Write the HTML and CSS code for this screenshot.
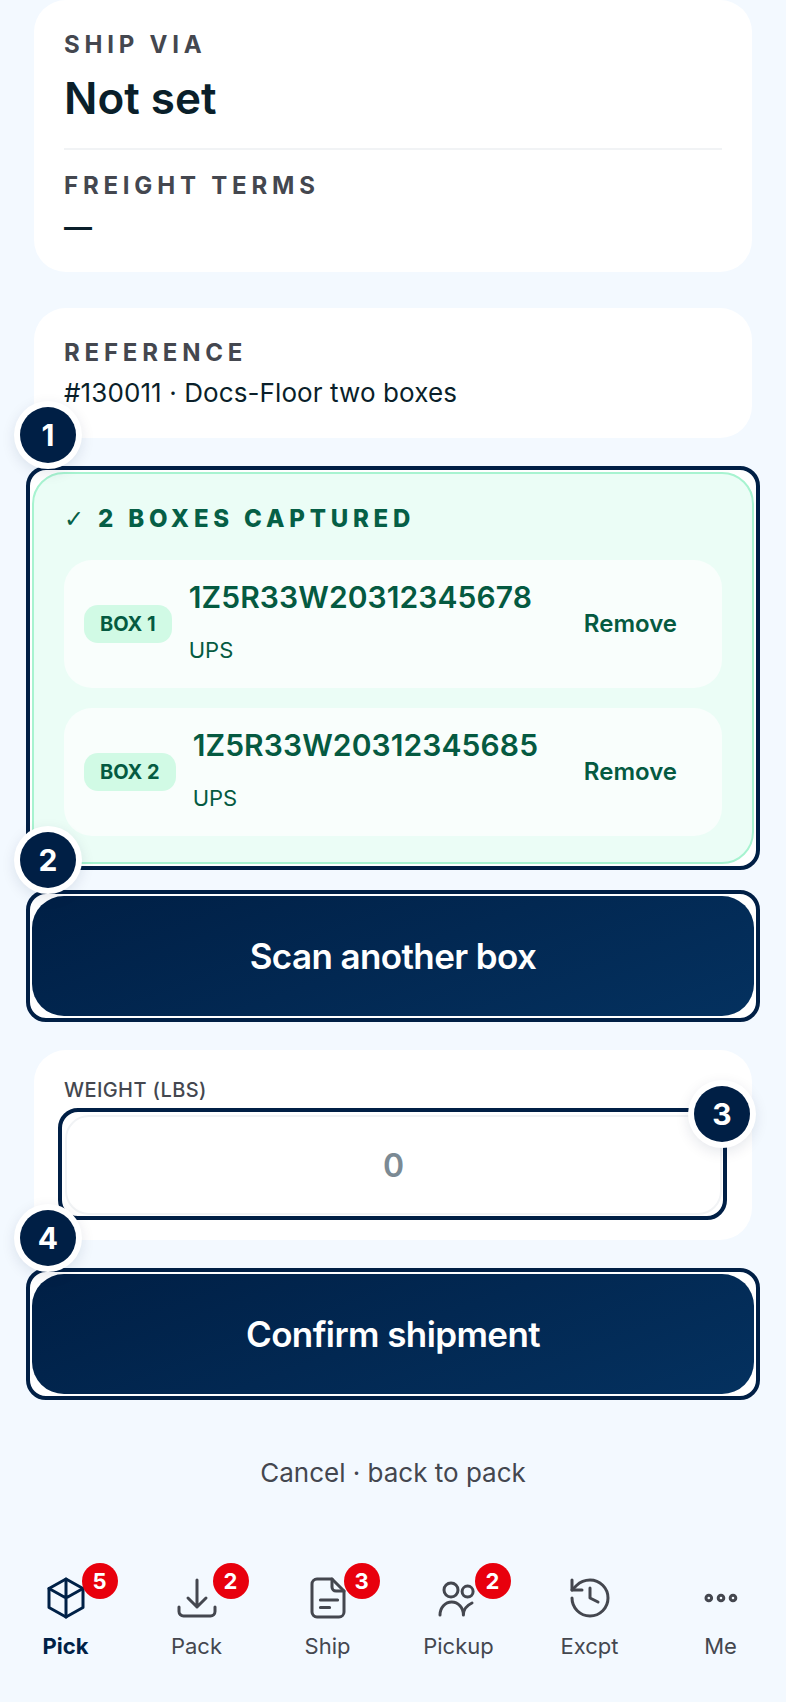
FILE: index.html
```html
<!DOCTYPE html>
<html lang="en">
<head>
    <meta charset="UTF-8">
    <meta name="viewport" content="width=device-width, initial-scale=1.0">
    <title>Ship confirmation</title>
    <link rel="stylesheet" href="styles.css">
</head>
<body>
    <main class="page">
        <section class="card card-ship">
            <div class="label">SHIP VIA</div>
            <div class="value-big">Not set</div>
            <div class="divider"></div>
            <div class="label">FREIGHT TERMS</div>
            <div class="value-dash">—</div>
        </section>

        <section class="card card-ref">
            <div class="label">REFERENCE</div>
            <div class="value">#130011 · Docs-Floor two boxes</div>
        </section>

        <!-- captured boxes -->
        <div class="highlight hl-boxes">
            <span class="step step-1">1</span>
            <div class="captured">
                <div class="captured-title"><span class="tick">✓</span>2 BOXES CAPTURED</div>
                <div class="box-row">
                    <span class="pill">BOX 1</span>
                    <div class="box-info">
                        <div class="tracking">1Z5R33W20312345678</div>
                        <div class="carrier">UPS</div>
                    </div>
                    <button class="remove" type="button">Remove</button>
                </div>
                <div class="box-row">
                    <span class="pill">BOX 2</span>
                    <div class="box-info">
                        <div class="tracking">1Z5R33W20312345685</div>
                        <div class="carrier">UPS</div>
                    </div>
                    <button class="remove" type="button">Remove</button>
                </div>
            </div>
        </div>

        <div class="highlight hl-scan">
            <span class="step step-2">2</span>
            <button class="primary" type="button">Scan another box</button>
        </div>

        <section class="card card-weight">
            <label class="field-label" for="weight">WEIGHT (LBS)</label>
            <div class="highlight hl-input">
                <input id="weight" type="text" placeholder="0">
                <span class="step step-3">3</span>
            </div>
            <span class="step step-4">4</span>
        </section>

        <div class="highlight hl-confirm">
            <button class="primary" type="button">Confirm shipment</button>
        </div>

        <div class="cancel">Cancel · back to pack</div>
    </main>

    <nav class="tabbar">
        <div class="tab active">
            <span class="count">5</span>
            <svg viewBox="0 0 24 24"><path d="M12 2.5l8.5 4.75v9.5L12 21.5l-8.5-4.75v-9.5z"/><path d="M3.5 7.25L12 12l8.5-4.75M12 2.5v19"/></svg>
            <span class="tab-name">Pick</span>
        </div>
        <div class="tab">
            <span class="count">2</span>
            <svg viewBox="0 0 24 24"><path d="M3 16.5v2.25A2.25 2.25 0 0 0 5.25 21h13.5A2.25 2.25 0 0 0 21 18.75V16.5M16.5 12L12 16.5m0 0L7.5 12m4.5 4.5V3"/></svg>
            <span class="tab-name">Pack</span>
        </div>
        <div class="tab">
            <span class="count">3</span>
            <svg viewBox="0 0 24 24"><path d="M6.5 2.5H14L20 8.5V19a2.5 2.5 0 0 1-2.5 2.5h-11A2.5 2.5 0 0 1 4 19V5a2.5 2.5 0 0 1 2.5-2.5z"/><path d="M14 2.5V6.5a2 2 0 0 0 2 2h4M8.2 13h8.6M8.2 16.8h4.6"/></svg>
            <span class="tab-name">Ship</span>
        </div>
        <div class="tab">
            <span class="count">2</span>
            <svg viewBox="0 0 24 24"><circle cx="8" cy="8" r="3.5"/><circle cx="16.3" cy="8.8" r="2.75"/><path d="M2.5 20.5a5.85 6.5 0 0 1 11.7 0M14.2 20.5c0-2.5 1.7-4.8 4.3-6"/></svg>
            <span class="tab-name">Pickup</span>
        </div>
        <div class="tab">
            <svg viewBox="0 0 24 24"><path d="M3 12a9 9 0 1 0 9-9 9.75 9.75 0 0 0-6.74 2.74L3 8"/><path d="M3 3v5h5M12 7v5l4 2"/></svg>
            <span class="tab-name">Excpt</span>
        </div>
        <div class="tab">
            <svg viewBox="0 0 24 24"><circle cx="5.9" cy="12" r="1.4"/><circle cx="12" cy="12" r="1.4"/><circle cx="18" cy="12" r="1.4"/></svg>
            <span class="tab-name">Me</span>
        </div>
    </nav>
</body>
</html>
```

FILE: styles.css
```css
* {
    margin: 0;
    padding: 0;
    box-sizing: border-box;
}

body {
    font-family: Inter, "Noto Sans", sans-serif;
    background: #f3f9ff;
    color: #0a1f2a;
}

.page {
    padding: 0 34px;
}

.card {
    background: white;
    border-radius: 32px;
    padding: 0 30px;
    position: relative;
}

.card-ship {
    height: 272px;
    padding-top: 29px;
    margin-bottom: 36px;
}

.card-ref {
    height: 130px;
    padding-top: 29px;
}

.card-weight {
    height: 190px;
    padding-top: 26px;
    margin-top: 28px;
}

.label {
    font-size: 24px;
    line-height: 32px;
    font-weight: 700;
    letter-spacing: 4.8px;
    color: #44474f;
}

.value-big {
    font-size: 44px;
    line-height: 56px;
    font-weight: 600;
    margin-top: 9px;
}

.divider {
    height: 2px;
    background: #f1f3f5;
    margin: 22px 0 20px;
}

.value-dash {
    font-size: 28px;
    line-height: 40px;
    font-weight: 600;
    margin-top: 5px;
}

.value {
    font-size: 26px;
    line-height: 36px;
    margin-top: 6px;
    letter-spacing: 0.1px;
}

/* tour outline round a control */
.highlight {
    position: relative;
    background: white;
    border: 4px solid #001f45;
    border-radius: 20px;
    padding: 2px;
    margin: 0 -8px;
}

.hl-boxes {
    margin-top: 28px;
}

.hl-scan {
    margin-top: 20px;
}

.hl-confirm {
    margin-top: 28px;
}

.hl-input {
    margin: 4px -5px 0 -6px;
    padding: 3px 1px 1px 3px;
    height: 112px;
}

.step {
    position: absolute;
    width: 56px;
    height: 56px;
    border-radius: 50%;
    background: #001f45;
    color: white;
    font-size: 30px;
    font-weight: 700;
    display: flex;
    align-items: center;
    justify-content: center;
    box-shadow: 0 0 0 6px white, 0 4px 14px 6px rgba(0, 31, 69, 0.1);
    z-index: 2;
}

.step-1 {
    top: -63px;
    left: -10px;
}

.step-2 {
    top: -62px;
    left: -10px;
}

.step-3 {
    top: -26px;
    right: -27px;
}

.step-4 {
    left: -14px;
    bottom: -26px;
}

.captured {
    background: #ebfdf6;
    border: 2px solid #a7f3d0;
    border-radius: 32px;
    height: 392px;
    padding: 29px 30px 0 30px;
}

.captured-title {
    font-size: 24px;
    line-height: 32px;
    font-weight: 800;
    letter-spacing: 4.8px;
    color: #065f46;
    margin-bottom: 25px;
    display: flex;
    align-items: center;
}

.tick {
    font-family: "DejaVu Sans", sans-serif;
    font-size: 24px;
    font-weight: 700;
    width: 34px;
    letter-spacing: 0;
}

.box-row {
    display: flex;
    align-items: center;
    height: 128px;
    padding: 0 45px 0 20px;
    margin-bottom: 20px;
    background: #f9fefc;
    border-radius: 28px;
    color: #055a41;
}

.pill {
    background: #d1fae5;
    border-radius: 14px;
    height: 38px;
    line-height: 38px;
    padding: 0 16px;
    font-size: 20px;
    font-weight: 700;
    margin-right: 17px;
}

.box-info {
    padding-bottom: 6px;
}

.tracking {
    font-size: 30px;
    line-height: 40px;
    font-weight: 600;
    letter-spacing: 0.1px;
}

.carrier {
    font-size: 22px;
    line-height: 30px;
    margin-top: 18px;
}

.remove {
    margin: 0 0 2px auto;
    background: none;
    border: none;
    font-family: inherit;
    font-size: 24px;
    font-weight: 600;
    color: #055a41;
}

.primary {
    display: block;
    width: 100%;
    height: 120px;
    border: none;
    border-radius: 32px;
    background: linear-gradient(160deg, #001f45, #04315f);
    color: white;
    font-family: inherit;
    font-size: 35px;
    font-weight: 600;
    letter-spacing: -0.6px;
}

.field-label {
    display: block;
    font-size: 20px;
    line-height: 28px;
    font-weight: 500;
    letter-spacing: 0.4px;
    color: #44474f;
}

input {
    display: block;
    width: 100%;
    height: 100px;
    border: 2px solid #f1f3f5;
    border-radius: 24px;
    background: white;
    text-align: center;
    font-family: inherit;
    font-size: 32px;
    font-weight: 600;
    outline: none;
}

input::placeholder {
    color: #7b8a94;
    opacity: 1;
}

.cancel {
    margin-top: 55px;
    text-align: center;
    font-size: 26px;
    line-height: 36px;
    color: #44474f;
}

.tabbar {
    display: flex;
    margin-top: 83px;
    padding-bottom: 42px;
}

.tab {
    flex: 1;
    position: relative;
    display: flex;
    flex-direction: column;
    align-items: center;
    color: #44474f;
}

.tab svg {
    width: 48px;
    height: 48px;
    fill: none;
    stroke: currentColor;
    stroke-width: 1.5;
    stroke-linecap: round;
    stroke-linejoin: round;
}

.tab-name {
    font-size: 22px;
    line-height: 28px;
    margin-top: 10px;
}

.tab.active {
    color: #002147;
}

.tab.active .tab-name {
    font-weight: 700;
}

.count {
    position: absolute;
    top: -11px;
    left: calc(50% + 16px);
    width: 36px;
    height: 36px;
    border-radius: 50%;
    background: #e8000d;
    color: white;
    font-size: 22px;
    font-weight: 700;
    display: flex;
    align-items: center;
    justify-content: center;
}
```
